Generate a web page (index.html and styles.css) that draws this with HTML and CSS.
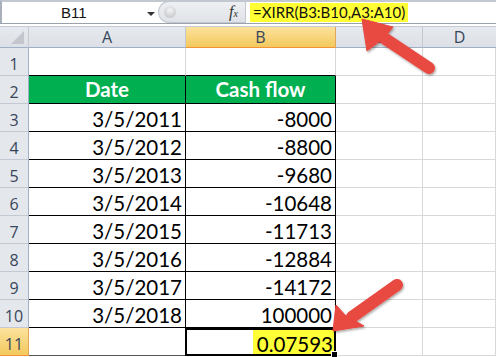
FILE: index.html
```html
<!DOCTYPE html>
<html>
<head>
<meta charset="utf-8">
<link rel="stylesheet" href="styles.css">
</head>
<body>
<div class="app">
  <div class="fbar">
    <div class="namebox"><span class="nb-text">B11</span><span class="nb-arrow"></span></div>
    <div class="fxzone">
      <span class="knob"></span>
      <span class="fx">f<sub>x</sub></span>
    </div>
    <div class="formula"><span class="hl">=XIRR(B3:B10,A3:A10)</span></div>
  </div>
  <div class="sep"></div>
  <div class="sheet">
    <div class="ch corner"><span class="tri"></span></div>
    <div class="ch">A</div>
    <div class="ch sel">B</div>
    <div class="ch">C</div>
    <div class="ch last">D</div>

    <div class="rh">1</div><div class="c topb"></div><div class="c topb"></div><div class="c"></div><div class="c"></div>
    <div class="rh">2</div><div class="c t hd left">Date</div><div class="c t hd">Cash flow</div><div class="c"></div><div class="c"></div>
    <div class="rh">3</div><div class="c t left">3/5/2011</div><div class="c t">-8000</div><div class="c"></div><div class="c"></div>
    <div class="rh">4</div><div class="c t left">3/5/2012</div><div class="c t">-8800</div><div class="c"></div><div class="c"></div>
    <div class="rh">5</div><div class="c t left">3/5/2013</div><div class="c t">-9680</div><div class="c"></div><div class="c"></div>
    <div class="rh">6</div><div class="c t left">3/5/2014</div><div class="c t">-10648</div><div class="c"></div><div class="c"></div>
    <div class="rh">7</div><div class="c t left">3/5/2015</div><div class="c t">-11713</div><div class="c"></div><div class="c"></div>
    <div class="rh">8</div><div class="c t left">3/5/2016</div><div class="c t">-12884</div><div class="c"></div><div class="c"></div>
    <div class="rh">9</div><div class="c t left">3/5/2017</div><div class="c t">-14172</div><div class="c"></div><div class="c"></div>
    <div class="rh">10</div><div class="c t left">3/5/2018</div><div class="c t">100000</div><div class="c"></div><div class="c"></div>
    <div class="rh sel">11</div><div class="c dark"></div><div class="c active"><span class="yel">0.07593</span><span class="handle"></span></div><div class="c"></div><div class="c"></div>
  </div>
  <svg class="arrows" width="496" height="357" viewBox="0 0 496 357">
    <defs>
      <filter id="sh" x="-20%" y="-20%" width="140%" height="140%">
        <feDropShadow dx="1" dy="1.5" stdDeviation="1.2" flood-color="#000" flood-opacity="0.35"/>
      </filter>
    </defs>
    <g fill="#e8483f" stroke="#e8483f" filter="url(#sh)">
      <line x1="381" y1="36" x2="429" y2="68" stroke-width="12" stroke-linecap="round"/>
      <polygon points="362,19 393,27 384,38 367,51" stroke-width="1" stroke-linejoin="round"/>
      <line x1="352" y1="317" x2="397" y2="285" stroke-width="12" stroke-linecap="round"/>
      <polygon points="333,331 336,305 345,315 364,326" stroke-width="1" stroke-linejoin="round"/>
    </g>
  </svg>
</div>
</body>
</html>
```
FILE: styles.css
```css
html, body {
  margin: 0;
  padding: 0;
  background: #ffffff;
}
.app {
  position: relative;
  width: 496px;
  height: 357px;
  overflow: hidden;
  font-family: "Lato", "Open Sans", sans-serif;
}
.fbar {
  display: flex;
  height: 23px;
  box-sizing: border-box;
  border-top: 2px solid #c3c8d0;
  border-left: 2px solid #a9b0bb;
  background: #ffffff;
}
.namebox {
  width: 156px;
  display: flex;
  align-items: center;
  position: relative;
  font-family: "Liberation Sans", sans-serif;
  font-size: 15px;
  color: #111;
}
.nb-text {
  margin-left: 59px;
}
.nb-arrow {
  margin-left: auto;
  margin-right: 3px;
  width: 0;
  height: 0;
  border-left: 4px solid transparent;
  border-right: 4px solid transparent;
  border-top: 4px solid #333;
  margin-top: 3px;
}
.fxzone {
  width: 87px;
  display: flex;
  align-items: center;
  background: linear-gradient(#eef0f3, #dfe2e7);
  border-radius: 11px 0 0 11px;
  border: 1px solid #c3c8d0;
  border-right: none;
  box-sizing: border-box;
  margin-top: -1px;
}
.knob {
  width: 12px;
  height: 12px;
  border-radius: 50%;
  margin-left: 5px;
  background: radial-gradient(circle at 50% 35%, #f4f4f4, #b9bcc1);
}
.fx {
  margin-left: auto;
  margin-right: 7px;
  font-family: "Liberation Serif", serif;
  font-style: italic;
  font-size: 16px;
  color: #333;
  line-height: 1;
}
.fx sub {
  font-size: 10px;
  vertical-align: baseline;
}
.formula {
  flex: 1;
  display: flex;
  align-items: center;
  padding-left: 4px;
  border-left: 1px solid #c3c8d0;
  font-family: "Lato", sans-serif;
  font-size: 15px;
  color: #111;
}
.hl {
  background: #ffff33;
  padding: 0 3px;
  line-height: 19px;
}
.sep {
  height: 4px;
  box-sizing: border-box;
  border-top: 1px solid #9aa2ad;
  border-bottom: 1px solid #c6cbd3;
  background: #ffffff;
}
.sheet {
  display: grid;
  grid-template-columns: 29px 157px 150px 87px 73px;
  grid-template-rows: 21px repeat(11, 28px);
}
.ch {
  background: linear-gradient(#e6e9ee, #dcdfe5);
  border-right: 1px solid #c3c9d2;
  border-bottom: 1px solid #9eb0c4;
  box-sizing: border-box;
  display: flex;
  align-items: center;
  justify-content: center;
  font-size: 16px;
  color: #37465a;
  font-family: "Open Sans", sans-serif;
}
.ch.last {
  border-right: none;
}
.ch.sel, .rh.sel {
  background: linear-gradient(#fbe29c, #f4c95e);
  border-right-color: #e2a75a;
  border-bottom: 1px solid #f29436;
}
.corner {
  position: relative;
}
.tri {
  position: absolute;
  right: 4px;
  bottom: 3px;
  width: 0;
  height: 0;
  border-left: 13px solid transparent;
  border-bottom: 13px solid #c3c7cd;
}
.rh {
  background: #e4e7ec;
  border-right: 1px solid #9eb0c4;
  border-bottom: 1px solid #c3c9d2;
  box-sizing: border-box;
  display: flex;
  align-items: center;
  justify-content: center;
  padding-top: 4px;
  font-size: 16px;
  color: #37465a;
  font-family: "Open Sans", sans-serif;
}
.c {
  border-right: 1px solid #d8d8d8;
  border-bottom: 1px solid #d8d8d8;
  box-sizing: border-box;
  display: flex;
  align-items: center;
  justify-content: flex-end;
  padding: 3px 3px 0 0;
  font-size: 20.5px;
  color: #000;
  font-family: "Lato", sans-serif;
}
.c.topb {
  border-bottom-color: #000;
}
.c.t {
  border-right-color: #000;
  border-bottom-color: #000;
}
.c.dark {
  border-bottom-color: #555;
  border-right-color: #000;
}
.c.hd {
  background: #00b050;
  color: #ffffff;
  font-weight: bold;
  justify-content: center;
  padding: 0 0 2px 0;
}
.c.active {
  position: relative;
  border: 2px solid #000;
  padding: 0;
  margin-left: -1px;
}
.yel {
  background: #ffff38;
  height: 100%;
  display: flex;
  align-items: center;
  padding: 3px 1px 0 4px;
  box-sizing: border-box;
}
.handle {
  position: absolute;
  right: -4px;
  bottom: -4px;
  width: 5px;
  height: 5px;
  background: #000;
  border: 1px solid #fff;
}
.arrows {
  position: absolute;
  left: 0;
  top: 0;
  pointer-events: none;
}
```
